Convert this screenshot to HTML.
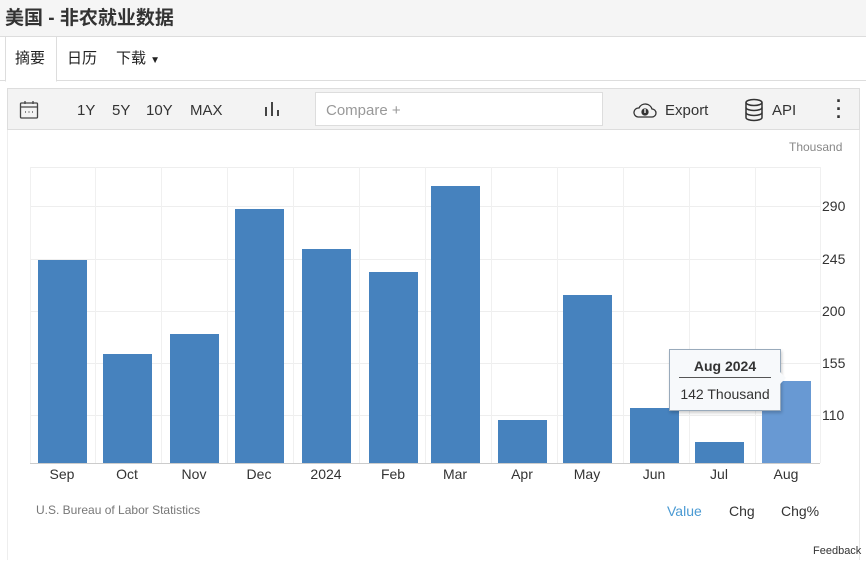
<!DOCTYPE html>
<html><head><meta charset="utf-8"><style>
*{margin:0;padding:0;box-sizing:border-box}
body{width:866px;height:565px;background:#fff;font-family:"Liberation Sans","Noto Sans CJK SC",sans-serif;position:relative;overflow:hidden;color:#333}
.abs{position:absolute}
.title{left:0;top:0;width:866px;height:37px;background:#f5f5f5;border-bottom:1px solid #ddd;font-size:19px;font-weight:bold;color:#333;padding:3px 0 0 5px}
.tabs{top:37px;left:0;width:866px;height:44px;border-bottom:1px solid #ddd}
.tab{position:absolute;top:10px;font-size:15px;color:#222}
.tb{left:7px;top:88px;width:853px;height:42px;background:#f3f3f3;border:1px solid #ddd}
.tb span{position:absolute;top:13px;font-size:15px;color:#333}
.chartbox{left:7px;top:130px;width:853px;height:430px;border-right:1px solid #e8e8e8;border-left:1px solid #eee}
.bar{position:absolute;background:#4682be;width:49px}
.yl{position:absolute;left:822px;font-size:14px;color:#333}
.xl{position:absolute;top:466px;font-size:14px;color:#333;width:60px;text-align:center}
.hg{position:absolute;left:30px;width:790px;height:1px;background:#eee}
.vg{position:absolute;top:167px;height:296px;width:1px;background:#f0f0f0}
</style></head><body>
<div class="abs title">美国 - 非农就业数据</div>
<div class="abs tabs">
<div class="abs" style="left:5px;top:0;width:52px;height:45px;border:1px solid #ddd;border-bottom:1px solid #fff;border-top:none;background:#fff"></div>
<div class="tab" style="left:15px">摘要</div>
<div class="tab" style="left:67px">日历</div>
<div class="tab" style="left:116px">下载 <span style="font-size:10px">▼</span></div>
</div>
<div class="abs tb">
<svg class="abs" style="left:11px;top:11px" width="20" height="20" viewBox="0 0 20 20" fill="none" stroke="#444" stroke-width="1.3"><rect x="1.5" y="3" width="17" height="15" rx="1"/><line x1="1.5" y1="7" x2="18.5" y2="7"/><line x1="6" y1="1" x2="6" y2="4"/><line x1="14" y1="1" x2="14" y2="4"/><line x1="6" y1="12" x2="7" y2="12"/><line x1="9.5" y1="12" x2="10.5" y2="12"/><line x1="13" y1="12" x2="14" y2="12"/></svg>
<span style="left:69px">1Y</span><span style="left:104px">5Y</span><span style="left:138px">10Y</span><span style="left:182px">MAX</span>
<svg class="abs" style="left:256px;top:12px" width="16" height="16"><rect x="1" y="6" width="2" height="9" fill="#444"/><rect x="7" y="1" width="2" height="14" fill="#444"/><rect x="13" y="9" width="2" height="6" fill="#444"/></svg>
<div class="abs" style="left:307px;top:3px;width:288px;height:34px;background:#fff;border:1px solid #ddd"></div>
<span style="left:318px;color:#999">Compare +</span>
<svg class="abs" style="left:624px;top:12px" width="26" height="18" viewBox="0 0 26 18" fill="none" stroke="#333" stroke-width="1.3"><path d="M6 16h14a4 4 0 0 0 0-8 7 7 0 0 0-13-1 4.5 4.5 0 0 0-1 9z"/><circle cx="13" cy="11" r="3" fill="#333"/><path d="M13 8v4" stroke="#fff"/></svg>
<span style="left:657px">Export</span>
<svg class="abs" style="left:736px;top:9px" width="20" height="24" viewBox="0 0 20 24" fill="none" stroke="#333" stroke-width="1.5"><ellipse cx="10" cy="4.5" rx="8" ry="3"/><path d="M2 4.5v15c0 1.7 3.6 3 8 3s8-1.3 8-3v-15"/><path d="M2 9.5c0 1.7 3.6 3 8 3s8-1.3 8-3M2 14.5c0 1.7 3.6 3 8 3s8-1.3 8-3"/></svg>
<span style="left:764px">API</span>
<span style="left:828px;font-weight:bold;font-size:18px;top:8px;line-height:8px;">·<br>·<br>·</span>
</div>
<div class="abs chartbox"></div>
<div class="abs" style="left:789px;top:140px;font-size:12px;color:#888">Thousand</div>
<div class="hg" style="top:167px"></div><div class="hg" style="top:206px"></div><div class="hg" style="top:259px"></div><div class="hg" style="top:311px"></div><div class="hg" style="top:363px"></div><div class="hg" style="top:415px"></div>
<div class="vg" style="left:30px"></div><div class="vg" style="left:95px"></div><div class="vg" style="left:161px"></div><div class="vg" style="left:227px"></div><div class="vg" style="left:293px"></div><div class="vg" style="left:359px"></div><div class="vg" style="left:425px"></div><div class="vg" style="left:491px"></div><div class="vg" style="left:557px"></div><div class="vg" style="left:623px"></div><div class="vg" style="left:689px"></div><div class="vg" style="left:755px"></div><div class="vg" style="left:820px"></div>
<div class="hg" style="top:463px;background:#ccc"></div>
<div class="bar" style="left:38px;top:260px;height:203px"></div>
<div class="bar" style="left:103px;top:354px;height:109px"></div>
<div class="bar" style="left:170px;top:334px;height:129px"></div>
<div class="bar" style="left:235px;top:209px;height:254px"></div>
<div class="bar" style="left:302px;top:249px;height:214px"></div>
<div class="bar" style="left:369px;top:272px;height:191px"></div>
<div class="bar" style="left:431px;top:186px;height:277px"></div>
<div class="bar" style="left:498px;top:420px;height:43px"></div>
<div class="bar" style="left:563px;top:295px;height:168px"></div>
<div class="bar" style="left:630px;top:408px;height:55px"></div>
<div class="bar" style="left:695px;top:442px;height:21px"></div>
<div class="bar" style="left:762px;top:381px;height:82px;background:#6899d3"></div>
<div class="yl" style="top:198px">290</div><div class="yl" style="top:251px">245</div><div class="yl" style="top:303px">200</div><div class="yl" style="top:355px">155</div><div class="yl" style="top:407px">110</div>
<div class="xl" style="left:32px">Sep</div><div class="xl" style="left:97px">Oct</div><div class="xl" style="left:164px">Nov</div><div class="xl" style="left:229px">Dec</div><div class="xl" style="left:296px">2024</div><div class="xl" style="left:363px">Feb</div><div class="xl" style="left:425px">Mar</div><div class="xl" style="left:492px">Apr</div><div class="xl" style="left:557px">May</div><div class="xl" style="left:624px">Jun</div><div class="xl" style="left:689px">Jul</div><div class="xl" style="left:756px">Aug</div>
<div class="abs" style="left:669px;top:349px;width:112px;height:62px;background:#f7f9fb;border:1px solid #9ab;box-shadow:1px 2px 3px rgba(0,0,0,.2)"></div>
<div class="abs" style="left:780px;top:372px;width:0;height:0;border-top:6px solid transparent;border-bottom:6px solid transparent;border-left:6px solid #f7f9fb"></div>
<div class="abs" style="left:669px;top:358px;width:112px;text-align:center;font-size:14px;font-weight:bold;color:#333">Aug 2024</div>
<div class="abs" style="left:679px;top:377px;width:92px;height:1px;background:#555"></div>
<div class="abs" style="left:669px;top:386px;width:112px;text-align:center;font-size:14px;color:#333">142 Thousand</div>
<div class="abs" style="left:36px;top:503px;font-size:12px;color:#777">U.S. Bureau of Labor Statistics</div>
<div class="abs" style="left:667px;top:503px;font-size:14px;color:#4a9ad3">Value</div>
<div class="abs" style="left:729px;top:503px;font-size:14px;color:#333">Chg</div>
<div class="abs" style="left:781px;top:503px;font-size:14px;color:#333">Chg%</div>
<div class="abs" style="left:813px;top:545px;font-size:11px;color:#333">Feedback</div>
</body></html>
